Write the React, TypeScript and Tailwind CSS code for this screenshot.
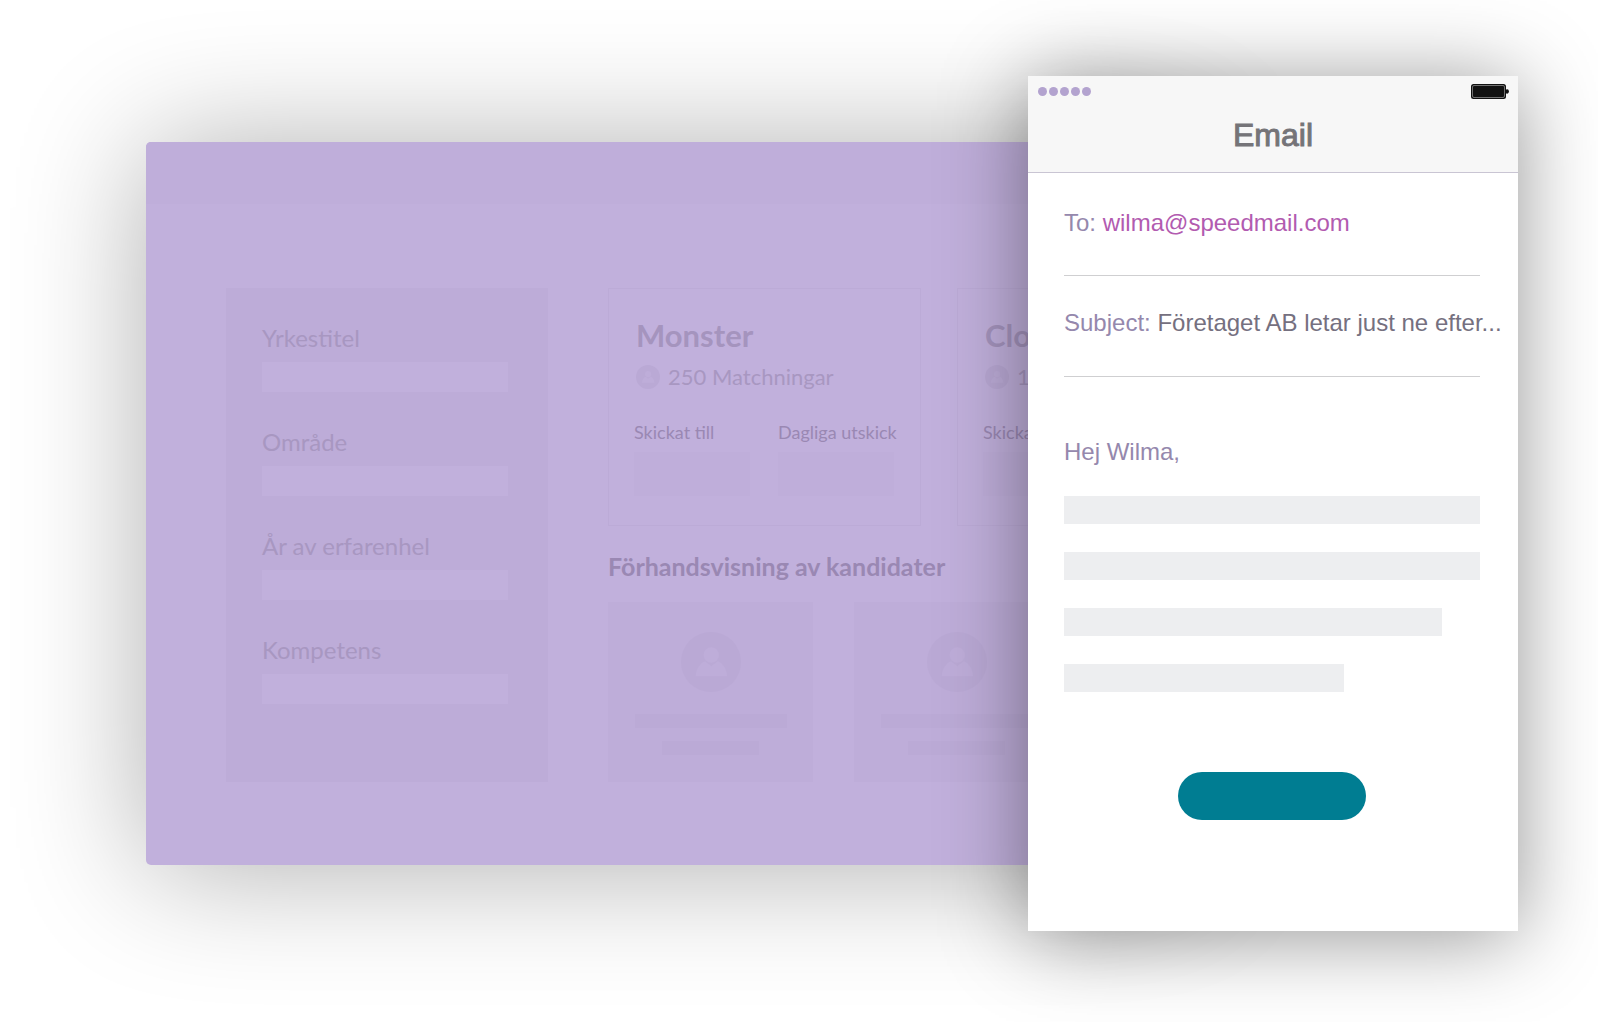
import { useId } from "react"

const filters = ["Yrkestitel", "Område", "År av erfarenhel", "Kompetens"]

const channels = [
  { name: "Monster", matches: "250 Matchningar", stats: ["Skickat till", "Dagliga utskick"] },
  { name: "Clo", matches: "10", stats: ["Skickat till"] },
]

const candidates = [1, 2]

function Avatar({ className }: { className: string }) {
  return (
    <svg viewBox="0 0 60 60" className={className} aria-hidden="true">
      <circle cx="30" cy="30" r="30" fill="#baa9d5" />
      <circle cx="30.3" cy="23" r="7.7" fill="#beadd9" />
      <path
        d="M14.7 44.2C15 37 19 31 24.2 29.2C25.6 31.4 28.6 31.8 30.4 34.4C32 31.8 35 31.4 36.6 29.2C42 31 45.8 37 46.2 44.2Z"
        fill="#beadd9"
      />
    </svg>
  )
}

function FilterField({ label }: { label: string }) {
  const id = useId()
  return (
    <div className="flex flex-col gap-2.5">
      <label htmlFor={id} className="text-2xl leading-7 text-[#a897c1]">
        {label}
      </label>
      <input id={id} type="text" className="h-[30px] w-full bg-[#c1b0dc] outline-none" />
    </div>
  )
}

function StatField({ label }: { label: string }) {
  const id = useId()
  return (
    <div className="flex w-[116px] shrink-0 flex-col gap-2">
      <label htmlFor={id} className="whitespace-nowrap text-lg leading-6 text-[#9a88b3]">
        {label}
      </label>
      <input id={id} type="text" readOnly className="h-11 w-full bg-[#bfaeda] outline-none" />
    </div>
  )
}

function ChannelCard({ name, matches, stats }: { name: string; matches: string; stats: string[] }) {
  return (
    <article className="h-[238px] w-[313px] shrink-0 border border-[#bcabd7] px-[25px] pt-7">
      <h2 className="pl-0.5 text-[31px] font-bold leading-9 text-[#a594be]">{name}</h2>
      <p className="flex items-center gap-2 pl-0.5 pt-2.5 text-[22px] leading-7 text-[#a897c1]">
        <Avatar className="size-6" />
        {matches}
      </p>
      <div className="flex gap-7 pt-[29px]">
        {stats.map((stat) => (
          <StatField key={stat} label={stat} />
        ))}
      </div>
    </article>
  )
}

function CandidateCard() {
  return (
    <article className="flex h-[180px] w-[205px] shrink-0 flex-col items-center bg-[#beadd9] pt-[30px]">
      <Avatar className="size-[60px]" />
      <div className="mt-[22px] h-3.5 w-[152px] bg-[#bbaad6]" />
      <div className="mt-[13px] h-3.5 w-[97px] bg-[#bbaad6]" />
    </article>
  )
}

function Dashboard() {
  return (
    <section className="-mr-40 min-w-0 flex-1 overflow-hidden rounded-[5px] bg-[#c1b0dc] pb-[83px] font-['Lato',sans-serif] shadow-[0_4px_130px_rgba(0,0,0,0.32)]">
      <div className="h-[62px] bg-[#bfaeda]" />
      <div className="flex gap-[60px] pl-20 pt-[84px]">
        <aside className="flex h-[494px] w-[322px] shrink-0 flex-col gap-9 bg-[#bdacd8] pl-9 pr-10 pt-9">
          {filters.map((label) => (
            <FilterField key={label} label={label} />
          ))}
        </aside>
        <div className="min-w-0 flex-1 overflow-hidden">
          <div className="flex gap-9">
            {channels.map((channel) => (
              <ChannelCard key={channel.name} {...channel} />
            ))}
          </div>
          <h3 className="pt-6 text-[25px] font-bold leading-8 text-[#9a88b3]">
            Förhandsvisning av kandidater
          </h3>
          <div className="flex gap-[41px] pt-5">
            {candidates.map((candidate) => (
              <CandidateCard key={candidate} />
            ))}
          </div>
        </div>
      </div>
    </section>
  )
}

function Battery() {
  return (
    <svg viewBox="0 0 38 15" className="h-[15px] w-[38px]" aria-hidden="true">
      <rect width="35" height="15" rx="2.5" fill="#111" />
      <rect x="1.5" y="1.5" width="32" height="12" rx="1.5" fill="none" stroke="#8a8a8a" strokeWidth="0.8" />
      <path d="M34 5.5H35.5A2 2.5 0 0 1 38 7.5A2 2.5 0 0 1 35.5 9.5H34Z" fill="#111" />
    </svg>
  )
}

function Phone() {
  return (
    <section className="relative z-10 w-[490px] shrink-0 bg-white pb-[111px] font-['Liberation_Sans',Arial,sans-serif] shadow-[0_6px_80px_rgba(0,0,0,0.42)]">
      <header className="h-[97px] border-b border-[#c9c5d3] bg-[#f7f7f7] pt-2">
        <div className="flex items-center justify-between pl-2.5 pr-[9px]">
          <div className="flex gap-0.5">
            {[1, 2, 3, 4, 5].map((dot) => (
              <span key={dot} className="size-[9px] rounded-full bg-[#b3a3cf]" />
            ))}
          </div>
          <Battery />
        </div>
        <h1 className="pt-[18px] text-center text-[32px] leading-9 text-[#757478] [-webkit-text-stroke:1px_#757478]">
          Email
        </h1>
      </header>
      <div className="px-9 text-2xl">
        <p className="mr-0.5 border-b border-[#cfcfd1] pb-9 pt-[34px] text-[#9588ad]">
          To:{" "}
          <a href="mailto:wilma@speedmail.com" className="text-[#b25bb0]">
            wilma@speedmail.com
          </a>
        </p>
        <p className="mr-0.5 whitespace-nowrap border-b border-[#cfcfd1] pb-[37px] pt-[31px] text-[#9588ad]">
          Subject: <span className="text-[#757080]">Företaget AB letar just ne efter...</span>
        </p>
        <p className="pt-[59px] text-[#9588ad]">Hej Wilma,</p>
        <div className="mr-0.5 flex flex-col gap-7 pt-7">
          <div className="h-7 bg-[#edeef0]" />
          <div className="h-7 bg-[#edeef0]" />
          <div className="h-7 w-[378px] bg-[#edeef0]" />
          <div className="h-7 w-[280px] bg-[#edeef0]" />
        </div>
      </div>
      <div className="flex justify-center pr-0.5 pt-20">
        <button type="button" aria-label="Öppna" className="h-12 w-[188px] rounded-full bg-[#007d92]" />
      </div>
    </section>
  )
}

export default function App() {
  return (
    <main className="flex min-h-screen items-center overflow-hidden bg-white pb-[91px] pl-[146px] pr-20 pt-[76px]">
      <Dashboard />
      <Phone />
    </main>
  )
}
